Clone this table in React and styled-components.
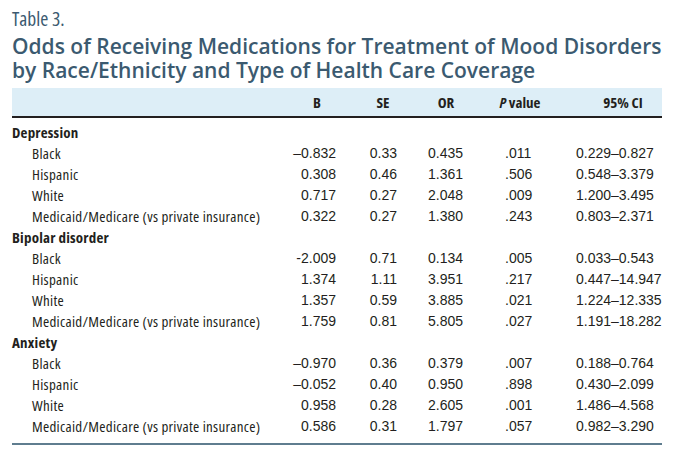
import React from "react";
import styled, { createGlobalStyle } from "styled-components";

const Global = createGlobalStyle`
  html, body { margin: 0; padding: 0; background: #ffffff; }
  body { width: 674px; height: 465px; overflow: hidden; }
`;

const COLS = "278px 54px 78px 48px 100px 92px";
const cond = `"Open Sans", "Liberation Sans", sans-serif`;

const Page = styled.div`
  padding: 8px 12px 0 12px;
  width: 650px;
`;

const Label = styled.div`
  font-family: ${cond};
  font-stretch: 75%;
  font-size: 19.5px;
  line-height: 22px;
  color: #3b5a70;
  height: 26px;
`;

const Title = styled.h1`
  margin: 0;
  font-family: "Open Sans", Lato, sans-serif;
  font-weight: 600;
  font-size: 21px;
  line-height: 24px;
  letter-spacing: 0;
  color: #3b5a70;
  padding-bottom: 6px;
`;

const Table = styled.div`
  display: flex;
  flex-direction: column;
`;

const HeadRow = styled.div`
  display: grid;
  grid-template-columns: ${COLS};
  height: 28px;
  align-items: center;
  background: #ddeef7;
  border-bottom: 2px solid #231f20;
`;

const HeadCell = styled.div`
  font-family: ${cond};
  font-stretch: 75%;
  font-weight: 700;
  font-size: 15px;
  color: #231f20;
  text-align: center;
  padding-left: ${(p) => p.$pl || 0}px;
  em { font-style: italic; }
`;

const Body = styled.div`
  padding: 3.5px 0 6px 0;
  border-bottom: 2px solid #5f7d8f;
`;

const Row = styled.div`
  display: grid;
  grid-template-columns: ${COLS};
  height: 21px;
  align-items: center;
`;

const GroupName = styled.div`
  font-family: ${cond};
  font-stretch: 75%;
  font-weight: 700;
  font-size: 15px;
  letter-spacing: 0.2px;
  color: #231f20;
  grid-column: 1 / -1;
`;

const RowLabel = styled.div`
  font-family: ${cond};
  font-stretch: 75%;
  font-size: 15px;
  letter-spacing: 0.3px;
  color: #231f20;
  padding-left: 20px;
  white-space: nowrap;
`;

const Num = styled.div`
  font-family: "Liberation Sans", Arial, sans-serif;
  font-size: 14px;
  color: #231f20;
  white-space: nowrap;
  text-align: ${(p) => p.$align};
  padding-right: ${(p) => p.$pr || 0}px;
  padding-left: ${(p) => p.$pl || 0}px;
`;

const groups = [
  {
    name: "Depression",
    rows: [
      ["Black", "–0.832", "0.33", "0.435", ".011", "0.229–0.827"],
      ["Hispanic", "0.308", "0.46", "1.361", ".506", "0.548–3.379"],
      ["White", "0.717", "0.27", "2.048", ".009", "1.200–3.495"],
      ["Medicaid/Medicare (vs private insurance)", "0.322", "0.27", "1.380", ".243", "0.803–2.371"],
    ],
  },
  {
    name: "Bipolar disorder",
    rows: [
      ["Black", "-2.009", "0.71", "0.134", ".005", "0.033–0.543"],
      ["Hispanic", "1.374", "1.11", "3.951", ".217", "0.447–14.947"],
      ["White", "1.357", "0.59", "3.885", ".021", "1.224–12.335"],
      ["Medicaid/Medicare (vs private insurance)", "1.759", "0.81", "5.805", ".027", "1.191–18.282"],
    ],
  },
  {
    name: "Anxiety",
    rows: [
      ["Black", "–0.970", "0.36", "0.379", ".007", "0.188–0.764"],
      ["Hispanic", "–0.052", "0.40", "0.950", ".898", "0.430–2.099"],
      ["White", "0.958", "0.28", "2.605", ".001", "1.486–4.568"],
      ["Medicaid/Medicare (vs private insurance)", "0.586", "0.31", "1.797", ".057", "0.982–3.290"],
    ],
  },
];

export default function App() {
  return (
    <Page>
      <Global />
      <Label>Table 3.</Label>
      <Title>
        Odds of Receiving Medications for Treatment of Mood Disorders
        <br />
        by Race/Ethnicity and Type of Health Care Coverage
      </Title>
      <Table>
        <HeadRow>
          <div />
          <HeadCell>B</HeadCell>
          <HeadCell>SE</HeadCell>
          <HeadCell>OR</HeadCell>
          <HeadCell>
            <em>P</em> value
          </HeadCell>
          <HeadCell $pl={14}>95% CI</HeadCell>
        </HeadRow>
        <Body>
          {groups.map((g) => (
            <React.Fragment key={g.name}>
              <Row>
                <GroupName>{g.name}</GroupName>
              </Row>
              {g.rows.map((r, i) => (
                <Row key={i}>
                  <RowLabel>{r[0]}</RowLabel>
                  <Num $align="right" $pr={8}>{r[1]}</Num>
                  <Num $align="right" $pr={25}>{r[2]}</Num>
                  <Num $align="right" $pr={7}>{r[3]}</Num>
                  <Num $align="left" $pl={35}>{r[4]}</Num>
                  <Num $align="left" $pl={6}>{r[5]}</Num>
                </Row>
              ))}
            </React.Fragment>
          ))}
        </Body>
      </Table>
    </Page>
  );
}
